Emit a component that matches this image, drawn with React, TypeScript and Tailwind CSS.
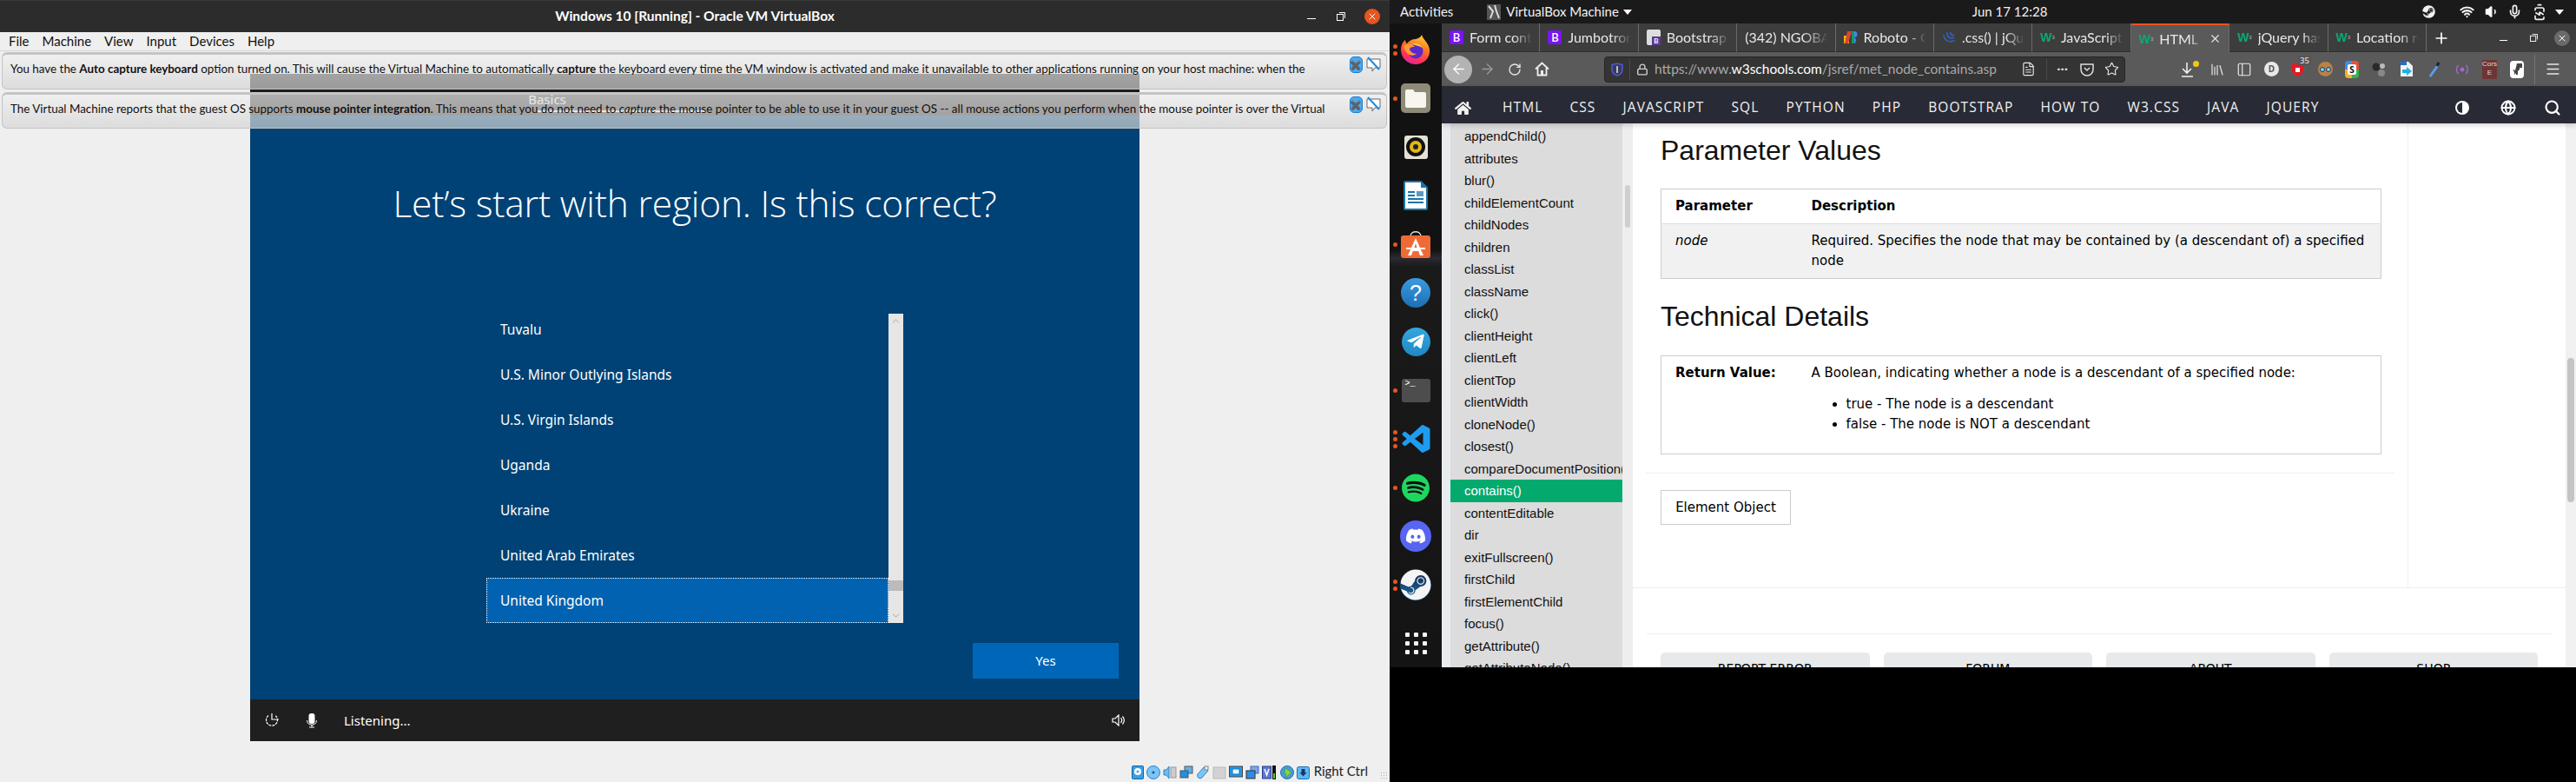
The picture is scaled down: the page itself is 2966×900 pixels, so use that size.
import React from "react";
import { ArrowLeft, ArrowRight, RotateCw, Lock, FileText, Star, Library, PanelLeft, Menu, Plus, X, Search, Globe, ChevronUp, ChevronDown, Volume1, Mic, BatteryCharging, Wifi } from "lucide-react";
import { FaDiscord, FaSpotify, FaSteam, FaHome, FaTelegramPlane } from "react-icons/fa";

const Ubu = "font-['Lato',sans-serif]";

function NoteBtns() {
  return (
    <div className="flex items-center gap-[4px] mr-[6px] mt-[2px] shrink-0">
      <div className="w-[15px] h-[19px] rounded-[5px] bg-[#4aa8ee] border border-[#1b7fd0] flex items-center justify-center text-[#12407c] text-[11px] leading-none font-bold">✖</div>
      <svg width="17" height="19" viewBox="0 0 17 19"><path d="M1 3h15v10h-6l-3 4v-4H1z" fill="#fff" stroke="#666" strokeWidth="1" /><path d="M2 1l13 14" stroke="#1d8be0" strokeWidth="2" /></svg>
    </div>
  );
}

function Notification({ children, h }: { children: React.ReactNode; h: string }) {
  return (
    <div className={`${h} border border-[#c4c4c4] border-t-[3px] rounded-[6px] bg-gradient-to-b from-[#f0f0f0b0] to-[#d4d4d4b0] flex justify-between items-start pl-[9px]`}>
      <div className={`${Ubu} flex-1 min-w-0 text-[13.400px] leading-[32px] text-[#111] whitespace-nowrap`}>{children}</div>
      <NoteBtns />
    </div>
  );
}

const countries = ["Tuvalu", "U.S. Minor Outlying Islands", "U.S. Virgin Islands", "Uganda", "Ukraine", "United Arab Emirates"];

function VmScreen() {
  return (
    <div className="w-[1024px] h-[768px] flex flex-col bg-[#004275] font-['Noto_Sans',sans-serif] text-white">
      <div className="h-[48px] bg-[#1c1c1c] flex flex-col items-center">
        <div className="h-[20px]" />
        <div className="ml-[-340px] text-[15px] leading-[20px] mt-[-1px] text-[#e0e0e0]">Basics</div>
        <div className="ml-[-170px] w-[195px] h-[2px] bg-[#f5f5f5] mt-[3px]" />
      </div>
      <div className="flex-1 flex flex-col items-center">
        <h1 className="mt-[72px] text-[42.500px] leading-[58px] font-light font-['Open_Sans',sans-serif] tracking-[-0.2px] whitespace-nowrap">Let’s start with region. Is this correct?</h1>
        <div className="mt-[98px] w-[480px] h-[356px] flex shrink-0">
          <div className="w-[463px] h-[356px] flex flex-col justify-end overflow-hidden">
            {countries.map((c) => (
              <div key={c} className="h-[52px] shrink-0 pl-[16px] pt-[1px] flex items-center text-[15.500px] text-white">{c}</div>
            ))}
            <div className="h-[52px] shrink-0 pl-[15px] pt-[1px] flex items-center text-[15.500px] bg-[#0062b1] border border-dotted border-white">United Kingdom</div>
          </div>
          <div className="w-[17px] bg-[#e6e6e6] flex flex-col items-center justify-between text-[#999]">
            <ChevronUp size={13} strokeWidth={1.5} className="mt-[2px]" />
            <div className="flex-1" />
            <div className="w-full h-[12px] bg-[#bbbbbb] mb-[22px]" />
            <ChevronDown size={13} strokeWidth={1.5} className="mb-[2px]" />
          </div>
        </div>
        <div className="w-[1024px] flex justify-end pr-[24px] mt-[23px]">
          <div className="w-[168px] h-[41px] bg-[#0067b8] flex items-center justify-center text-[15px]">Yes</div>
        </div>
      </div>
      <div className="h-[48px] bg-[#1f1f1f] flex items-center pl-[16px] pr-[16px]">
        <svg width="18" height="18" viewBox="0 0 18 18" fill="none" stroke="#fff" strokeWidth="1.2"><path d="M5 3.5a6.5 6.5 0 1 0 8 0" strokeDasharray="3 1" /><path d="M9 1v7h8" /></svg>
        <svg className="ml-[30px]" width="14" height="18" viewBox="0 0 14 18" fill="none"><rect x="3.5" y="1" width="7" height="12" rx="3" fill="#fff" /><path d="M1.5 9c0 7 11 7 11 0M7 14v3M4 17h6" stroke="#fff" /></svg>
        <div className="ml-[30px] text-[15px]">Listening...</div>
        <svg className="ml-auto" width="16" height="14" viewBox="0 0 16 14" fill="none" stroke="#fff" strokeWidth="1.2"><path d="M1 5h3l4-4v12l-4-4H1zM10.5 4c1.5 2 1.5 4 0 6M12.5 2.5c2.5 3 2.5 6 0 9" /></svg>
      </div>
    </div>
  );
}

function StatusIcons() {
  const b = "#3b9fe8";
  const items = [
    <svg key="1" width="14" height="16" viewBox="0 0 14 16"><rect x=".5" y=".5" width="13" height="15" rx="1" fill={b} stroke="#14609f" /><circle cx="7" cy="7" r="4" fill="#fff" /><circle cx="7" cy="7" r="1.5" fill={b} /></svg>,
    <svg key="2" width="16" height="16" viewBox="0 0 16 16"><circle cx="8" cy="8" r="7.5" fill="#7cc4f5" stroke="#2b84c9" /><circle cx="8" cy="8" r="1.6" fill="#14609f" /></svg>,
    <svg key="3" width="16" height="16" viewBox="0 0 16 16"><path d="M1 5h3l3-4v14l-3-4H1z" fill="#6dbdf3" stroke="#2b84c9" /><rect x="9" y="2" width="6" height="12" fill="#ccc" stroke="#999" /></svg>,
    <svg key="4" width="16" height="16" viewBox="0 0 16 16"><rect x="6" y="1" width="9" height="8" fill="#5fb0ec" stroke="#555" /><rect x="1" y="6" width="9" height="8" fill="#1e90e6" stroke="#555" /></svg>,
    <svg key="5" width="16" height="16" viewBox="0 0 16 16"><path d="M2 10l7-8 5 4-7 8c-2 2-7 0-5-4z" fill="#7cc4f5" stroke="#2b84c9" /><rect x="10" y="1" width="4" height="4" fill="#eee" stroke="#888" /></svg>,
    <svg key="6" width="16" height="16" viewBox="0 0 16 16"><rect x="1" y="2" width="14" height="13" fill="#d2d2d2" stroke="#bbb" /></svg>,
    <svg key="7" width="16" height="16" viewBox="0 0 16 16"><rect x=".5" y="1" width="15" height="12" fill="#1e9be8" stroke="#444" /><rect x="4" y="4" width="8" height="6" fill="#e9f6ff" stroke="#1477bb" /></svg>,
    <svg key="8" width="16" height="16" viewBox="0 0 16 16"><rect x="6" y="1" width="9" height="8" fill="#7ba6e8" stroke="#3d6dbb" /><rect x="1" y="6" width="10" height="9" fill="#2a8ee0" stroke="#333" /></svg>,
    <svg key="9" width="18" height="16" viewBox="0 0 18 16"><rect x=".5" y="1" width="10" height="14" fill="#5d78d2" stroke="#2a3f8f" /><path d="M3 4l2.5 7L8 4" stroke="#fff" fill="none" strokeWidth="1.5" /><rect x="12" y="0" width="4" height="16" fill="#111" /><rect x="13" y="9" width="2" height="6" fill="#4cd035" /></svg>,
    <svg key="10" width="16" height="16" viewBox="0 0 16 16"><circle cx="8" cy="8" r="7.5" fill="#3f9fe0" stroke="#2b6fa9" /><path d="M6 3l7 5-7 6 1-4-2-2z" fill="#8ed43a" stroke="#4e8f16" strokeWidth=".6" /></svg>,
    <svg key="11" width="15" height="15" viewBox="0 0 15 15"><rect x=".5" y=".5" width="14" height="14" rx="2" fill="#5fb6f2" stroke="#1d6fb0" /><path d="M5.5 3h4v4h2l-4 4.5L3.5 7h2z" fill="#123a6b" /></svg>,
  ];
  return <div className="flex items-center gap-[3px]">{items}</div>;
}

function VBoxWindow() {
  return (
    <div className="w-[1600px] h-[900px] flex flex-col bg-[#efefef]">
      <div className="h-[37px] bg-[#2c2c2c] border-t border-t-[#3a3a3a] flex items-center shrink-0">
        <div className="w-[102px]" />
        <div className={`${Ubu} flex-1 text-center text-[15.500px] font-bold text-white`}>Windows 10 [Running] - Oracle VM VirtualBox</div>
        <div className="w-[102px] flex items-center pl-[4px]">
          <div className="w-[10px] h-[1px] bg-white mt-[4px] ml-[3px]" />
          <svg className="ml-[24px]" width="10" height="10" viewBox="0 0 10 10" fill="none" stroke="#fff"><rect x=".5" y="2.5" width="7" height="7" /><path d="M3 .5h6.5V7" /></svg>
          <div className="ml-[22px] w-[18px] h-[18px] rounded-full bg-[#e95420] flex items-center justify-center text-white"><X size={12} strokeWidth={2} /></div>
        </div>
      </div>
      <div className={`${Ubu} h-[22px] border-b border-[#d8d8d8] flex items-center text-[15px] text-[#111] pl-[10px] gap-[15px] shrink-0`}>
        <span>File</span><span>Machine</span><span>View</span><span>Input</span><span>Devices</span><span>Help</span>
      </div>
      <div className="relative flex-1 flex flex-col">
        <div className="flex-1 flex flex-col items-center pt-[26px]">
          <VmScreen />
        </div>
        <div className="absolute top-[1px] left-[2px] right-[3px] flex flex-col gap-[3px]">
          <Notification h="h-[43px]">You have the <b>Auto capture keyboard</b> option turned on. This will cause the Virtual Machine to automatically <b>capture</b> the keyboard every time the VM window is activated and make it unavailable to other applications running on your host machine: when the</Notification>
          <Notification h="h-[42px]">The Virtual Machine reports that the guest OS supports <b>mouse pointer integration</b>. This means that you do not need to <i>capture</i> the mouse pointer to be able to use it in your guest OS -- all mouse actions you perform when the mouse pointer is over the Virtual</Notification>
        </div>
        <div className="h-[47px] flex items-end justify-end pb-[3px] pr-[3px]">
          <StatusIcons />
          <span className={`${Ubu} text-[15px] leading-[20px] ml-[5px] mr-[14px] text-[#222]`}>Right Ctrl</span>
          <div className="w-[8px] h-[8px] mb-[1px] bg-[radial-gradient(#aaa_1px,transparent_1px)] bg-[length:3px_3px]" />
        </div>
      </div>
    </div>
  );
}

function Firefox() {
  return (
    <svg width="36" height="36" viewBox="0 0 36 36">
      <defs>
        <linearGradient id="ff" x1="0.7" y1="0" x2="0.3" y2="1"><stop offset="0" stopColor="#ffd02e" /><stop offset=".45" stopColor="#ff6a2c" /><stop offset=".8" stopColor="#ff2d60" /><stop offset="1" stopColor="#d02bb0" /></linearGradient>
      </defs>
      <path d="M25 1c1 5 8 9 9 17 1 10-7 17-16 17S1 28 1 18C1 14 3 9 6 7c0 2 1 4 2 4 2-3 6-5 10-5 3-1 6-2 7-5z" fill="url(#ff)" />
      <circle cx="18" cy="20" r="8.5" fill="#592acb" />
      <path d="M4 14c5-3 9-3 13 1-2 0-5 0-6 2 0 3 4 6 8 6-5 4-13 1-15-9z" fill="#ff9a2e" />
      <path d="M13 12c4-2 10-1 13 4-3-2-8-3-13-4z" fill="#ffcf3a" />
    </svg>
  );
}

function Dots({ n }: { n: number }) {
  return (
    <div className="w-[12px] flex flex-col items-center gap-[3px]">
      {Array.from({ length: n }).map((_, i) => <div key={i} className="w-[5px] h-[5px] rounded-full bg-[#e95420]" />)}
    </div>
  );
}

function DockItem({ n = 0, children }: { n?: number; children: React.ReactNode }) {
  return (
    <div className="h-[56px] flex items-center">
      <Dots n={n} />
      <div className="w-[36px] flex items-center justify-center">{children}</div>
    </div>
  );
}

function Dock() {
  return (
    <div className="w-[60px] h-[741px] bg-[#131313] pt-[2px] flex flex-col shrink-0 bg-[linear-gradient(180deg,#121212_0,#121212_260px,#2b2933_270px,#1a1a1a_280px,#141414_100%)]">
      <DockItem n={2}><Firefox /></DockItem>
      <DockItem n={1}>
        <div className="w-[34px] h-[34px] rounded-[5px] bg-[#8f8a78] flex items-center justify-center">
          <svg width="24" height="22" viewBox="0 0 24 22"><path d="M0 3a2 2 0 0 1 2-2h7l2 3h11a2 2 0 0 1 2 2v14a2 2 0 0 1-2 2H2a2 2 0 0 1-2-2z" fill="#f7f5ee" /></svg>
        </div>
      </DockItem>
      <DockItem>
        <div className="w-[27px] h-[27px] rounded-[3px] bg-[#e6e1d6] flex items-center justify-center">
          <div className="w-[22px] h-[22px] rounded-full bg-[#111] flex items-center justify-center"><div className="w-[14px] h-[14px] rounded-full bg-[#e2b714] flex items-center justify-center"><div className="w-[6px] h-[6px] rounded-full bg-[#222]" /></div></div>
        </div>
      </DockItem>
      <DockItem>
        <svg width="28" height="34" viewBox="0 0 28 34"><path d="M1 2a1 1 0 0 1 1-1h18l7 7v24a1 1 0 0 1-1 1H2a1 1 0 0 1-1-1z" fill="#fff" stroke="#1b75a8" strokeWidth="2" /><path d="M20 1l7 7h-7z" fill="#1b75a8" /><path d="M5 13h8M5 17h8M5 21h18M5 25h18" stroke="#1b75a8" strokeWidth="2" /><rect x="15" y="12" width="8" height="6" fill="#5a9bc2" /></svg>
      </DockItem>
      <DockItem n={1}>
        <svg width="34" height="32" viewBox="0 0 34 32"><path d="M11 7c0-7 12-7 12 0" fill="none" stroke="#e8e0d0" strokeWidth="1.4" /><rect x="0" y="6" width="34" height="26" rx="3" fill="#ef6b35" /><path d="M17 9l9 20h-4l-1.800-5h-6.400L12 29H8z M15.500 20h3L17 15z" fill="#fff" /><rect x="6" y="20" width="22" height="2" fill="#fff" /></svg>
      </DockItem>
      <DockItem>
        <div className="w-[34px] h-[34px] rounded-full bg-gradient-to-b from-[#3b9be0] to-[#1c6fb4] flex items-center justify-center text-white text-[25px] leading-none font-['Liberation_Sans',sans-serif]">?</div>
      </DockItem>
      <DockItem>
        <div className="w-[33px] h-[33px] rounded-full bg-gradient-to-b from-[#35a6de] to-[#1e88c6] flex items-center justify-center text-white"><FaTelegramPlane size={22} /></div>
      </DockItem>
      <DockItem n={1}>
        <div className="w-[33px] h-[27px] rounded-[3px] bg-[#4d4d4d] text-white text-[10px] leading-[12px] pl-[4px] font-['Liberation_Mono',monospace]">&gt;_</div>
      </DockItem>
      <DockItem n={3}>
        <svg width="33" height="32" viewBox="0 0 24 24"><path fill="#1f9cf0" d="M23.15 2.587L18.21.21a1.494 1.494 0 0 0-1.705.29l-9.46 8.63-4.12-3.128a.999.999 0 0 0-1.276.057L.327 7.261A1 1 0 0 0 .326 8.74L3.899 12 .326 15.26a1 1 0 0 0 .001 1.479L1.65 17.94a.999.999 0 0 0 1.276.057l4.12-3.128 9.46 8.63a1.492 1.492 0 0 0 1.704.29l4.942-2.377A1.5 1.5 0 0 0 24 20.06V3.939a1.5 1.5 0 0 0-.85-1.352zm-5.146 14.861L10.826 12l7.178-5.448v10.896z" /></svg>
      </DockItem>
      <DockItem n={1}>
        <div className="w-[32px] h-[32px] rounded-full bg-[#111] flex items-center justify-center text-[#1ed760]"><FaSpotify size={33} /></div>
      </DockItem>
      <DockItem>
        <div className="w-[36px] h-[36px] rounded-full bg-[#5865f2] flex items-center justify-center text-white"><FaDiscord size={24} /></div>
      </DockItem>
      <DockItem n={2}>
        <div className="w-[36px] h-[36px] rounded-full bg-gradient-to-b from-[#10244a] to-[#1c6fa8] flex items-center justify-center text-[#f4f4f4] overflow-hidden"><FaSteam size={36} /></div>
      </DockItem>
      <div className="mt-[11px] ml-[12px] w-[36px] h-[56px] flex items-center justify-center">
        <div className="grid grid-cols-3 gap-x-[5px] gap-y-[5px]">
          {Array.from({ length: 9 }).map((_, i) => <div key={i} className="w-[5px] h-[5px] rounded-[1px] bg-[#f5f5f5]" />)}
        </div>
      </div>
    </div>
  );
}

function W3Fav() {
  return <span className="text-[#04aa6d] text-[14px] font-bold leading-none font-['Liberation_Sans',sans-serif] shrink-0">W<sup className="text-[6px] text-[#bbb] font-normal">3</sup></span>;
}
function BFav() {
  return <span className="w-[16px] h-[16px] rounded-[2px] bg-[#7b14f2] text-white text-[13px] leading-[16px] text-center font-semibold shrink-0">B</span>;
}

const tabs: { label: string; fav: React.ReactNode; active?: boolean }[] = [
  { label: "Form contr", fav: <BFav /> },
  { label: "Jumbotron", fav: <BFav /> },
  { label: "Bootstrap", fav: <span className="w-[16px] h-[18px] rounded-[2px] bg-[#ddd] flex items-end justify-end shrink-0"><span className="w-[10px] h-[10px] bg-[#5b3a94] text-white text-[8px] leading-[10px] text-center font-bold">B</span></span> },
  { label: "(342) NGOBAR", fav: null },
  { label: "Roboto - G", fav: <svg className="shrink-0" width="16" height="16" viewBox="0 0 16 16"><rect x="0" y="6" width="6" height="9" fill="#f4b400" /><path d="M4 1h5L5 15H1z" fill="#db4437" /><rect x="9" y="1" width="3" height="14" fill="#0f9d58" /><path d="M12 1a3.500 3.500 0 0 1 0 7 4 4 0 0 1 0 7z" fill="#4285f4" /></svg> },
  { label: ".css() | jQue", fav: <svg className="shrink-0" width="16" height="16" viewBox="0 0 16 16" fill="none" stroke="#2f62c9" strokeWidth="1.5"><path d="M2 5c0 7 8 10 13 6M6 2c-1 6 4 8 8 6M10 2c-1 3 2 4 4 3" /></svg> },
  { label: "JavaScript", fav: <W3Fav /> },
  { label: "HTML D", fav: <W3Fav />, active: true },
  { label: "jQuery has", fav: <W3Fav /> },
  { label: "Location re", fav: <W3Fav /> },
];

function TabStrip() {
  return (
    <div className={`${Ubu} h-[33px] bg-[#3d3d3d] flex items-stretch text-[16px] text-[#e8e8e8]`}>
      {tabs.map((t) => (
        <div key={t.label} className={`w-[113.400px] flex items-center gap-[7px] pl-[9px] pr-[8px] border-r border-[#6a6a6a] ${t.active ? "bg-[#5a5a5a] border-t-[2px] border-t-[#e95420]" : "border-b border-b-[#2e2e2e]"}`}>
          {t.fav}
          <span className="whitespace-nowrap overflow-hidden flex-1 [mask-image:linear-gradient(90deg,#000_70%,transparent)]">{t.label}</span>
          {t.active && <X size={15} strokeWidth={1.8} className="shrink-0" />}
        </div>
      ))}
      <div className="flex items-center pl-[7px] text-white"><Plus size={20} strokeWidth={2} /></div>
      <div className="flex-1" />
      <div className="flex items-center pr-[7px] text-white">
        <div className="w-[9px] h-[1px] bg-white mt-[6px]" />
        <svg className="ml-[26px]" width="9" height="9" viewBox="0 0 10 10" fill="none" stroke="#fff"><rect x=".5" y="2.5" width="7" height="7" /><path d="M3 .5h6.5V7" /></svg>
        <div className="ml-[19px] w-[18px] h-[18px] rounded-full bg-[#6a6a6a] flex items-center justify-center"><X size={12} strokeWidth={2} /></div>
      </div>
    </div>
  );
}

function Toolbar() {
  const tIcon = "shrink-0";
  return (
    <div className="h-[40px] bg-[#5a5a5a] border-b border-[#2e2e2e] flex items-center text-[#e8e8e8]">
      <div className="ml-[3px] w-[32px] h-[32px] rounded-full bg-[#b3b3b3] flex items-center justify-center text-white"><ArrowLeft size={19} strokeWidth={1.6} /></div>
      <ArrowRight size={19} strokeWidth={1.6} className="ml-[8px] text-[#9a9a9a]" />
      <RotateCw size={16} strokeWidth={2} className="ml-[14px]" />
      <svg className="ml-[15px]" width="17" height="17" viewBox="0 0 17 17" fill="none" stroke="#eee" strokeWidth="1.8"><path d="M1 8.500L8.500 1.500 16 8.500M3.500 7v8.500h10V7" /><rect x="7" y="10" width="3" height="5" fill="#eee" stroke="none" /></svg>
      <div className="ml-[63px] w-[600px] h-[30px] rounded-[4px] bg-[#343434] border border-[#252525] flex items-center">
        <svg className="ml-[7px] shrink-0" width="14" height="16" viewBox="0 0 14 16" fill="none"><path d="M1 2.500L7 1l6 1.500V8c0 4-3 6-6 7-3-1-6-3-6-7z" stroke="#4e57d4" strokeWidth="1.600" fill="#3a3a5a" /><path d="M7 4v8" stroke="#bbb" strokeWidth="2" /></svg>
        <div className="ml-[7px] w-[1px] h-[24px] bg-[#4a4a4a]" />
        <Lock size={14} strokeWidth={2.4} className="ml-[7px] text-[#cfcfcf]" />
        <div className={`${Ubu} ml-[7px] text-[15.500px] text-[#a9a9a9] whitespace-nowrap`}>https://www.<span className="text-white">w3schools.com</span>/jsref/met_node_contains.asp</div>
        <div className="flex-1" />
        <FileText size={17} strokeWidth={1.6} className={tIcon} />
        <div className="ml-[12px] w-[1px] h-[24px] bg-[#4a4a4a]" />
        <div className="ml-[11px] text-[15px] leading-none font-bold">···</div>
        <svg className="ml-[14px]" width="16" height="16" viewBox="0 0 16 16" fill="none" stroke="#ddd" strokeWidth="1.500"><path d="M1 2h14v6a7 7 0 0 1-14 0z" /><path d="M5 6l3 3 3-3" /></svg>
        <Star size={17} strokeWidth={1.6} className="ml-[12px] mr-[6px]" />
      </div>
      <div className="ml-[64px] flex items-center h-full">
        <div className="w-[18px] relative flex justify-center">
          <svg width="18" height="20" viewBox="0 0 18 20" fill="none" stroke="#eee" strokeWidth="1.600"><path d="M7 2v11M2 9l5 5 5-5M1 18h13" /></svg>
          <div className="absolute right-[-3px] top-[0px] w-[7px] h-[7px] rounded-full bg-[#f5c518]" />
        </div>
        <Library size={18} strokeWidth={1.6} className="ml-[15px]" />
        <PanelLeft size={18} strokeWidth={1.6} className="ml-[13px]" />
        <div className="ml-[14px] w-[17px] h-[17px] rounded-full bg-[#e8e8e8] text-[#555] text-[10px] leading-[17px] text-center font-bold">D</div>
        <div className="ml-[14px] relative w-[16px] h-[18px]">
          <svg width="15" height="18" viewBox="0 0 15 18"><path d="M1 3l6.500-2L14 3v7c0 3-3 6-6.500 7C4 16 1 13 1 10z" fill="#e01b24" /><rect x="5" y="7" width="5" height="5" fill="#fff" /></svg>
          <div className="absolute top-[-7px] left-[8px] px-[2px] bg-[#555] text-[#eee] text-[9.500px] leading-[11px]">35</div>
        </div>
        <div className="ml-[15px] w-[17px] h-[17px] rounded-full bg-[#b98247] flex items-center justify-center gap-[1px]"><span className="w-[6px] h-[6px] rounded-full bg-[#7fd0f5] border border-[#235]" /><span className="w-[6px] h-[6px] rounded-full bg-[#7fd0f5] border border-[#235]" /></div>
        <div className="ml-[14px] w-[16px] h-[20px] rounded-[4px] bg-[conic-gradient(#e84f3d_0_25%,#3bb04a_25%_50%,#f3b12f_50%_75%,#3f8fe0_75%)] flex items-center justify-center"><span className="w-[10px] h-[12px] bg-[#fff] text-[#111] text-[10px] leading-[12px] text-center font-bold rounded-[2px]">S</span></div>
        <svg className="ml-[15px]" width="16" height="18" viewBox="0 0 16 18"><circle cx="5" cy="6" r="4.500" fill="#2a2a2a" /><circle cx="12" cy="5" r="3" fill="#bbb" /><circle cx="11" cy="13" r="4" fill="#888" /></svg>
        <svg className="ml-[16px]" width="16" height="20" viewBox="0 0 16 20"><path d="M1 1h9l5 5v12H1z" fill="#f2f2f2" /><path d="M1 1h7v4H1z" fill="#1a73c9" /><path d="M3 10h5V7l6 5-6 5v-3H3z" fill="#1ab3e8" /></svg>
        <svg className="ml-[17px]" width="14" height="20" viewBox="0 0 14 20" fill="none"><path d="M2 18L11 5" stroke="#5a9cf0" strokeWidth="3" /><path d="M10 6l2-4" stroke="#222" strokeWidth="3" /></svg>
        <svg className="ml-[17px]" width="16" height="14" viewBox="0 0 16 14" fill="none" stroke="#a868d8" strokeWidth="1.300"><path d="M3.500 2c-2.500 3-2.500 7 0 10M12.500 2c2.500 3 2.500 6 0 10" /><circle cx="8" cy="7" r="1.800" fill="#a868d8" /></svg>
        <div className="ml-[15px] w-[17px] h-[22px] bg-[#6e3535] text-[#ddd] text-[8px] leading-[10px] text-center font-['Liberation_Sans',sans-serif]">Cors<br />E</div>
        <div className="ml-[15px] w-[16px] h-[20px] rounded-[4px] bg-white flex items-center justify-center"><svg width="13" height="15" viewBox="0 0 13 15"><path d="M6 1h6v5H9v2l-2 2v4H5v-2l-2 2v-3L1 8l3 1z" fill="#444" /></svg></div>
        <div className="ml-[12px] w-[1px] h-[34px] bg-[#757575]" />
        <Menu size={19} strokeWidth={1.8} className="ml-[11px]" />
      </div>
    </div>
  );
}

function W3Nav() {
  const items = ["HTML", "CSS", "JAVASCRIPT", "SQL", "PYTHON", "PHP", "BOOTSTRAP", "HOW TO", "W3.CSS", "JAVA", "JQUERY"];
  return (
    <div className="font-['Open_Sans',sans-serif] h-[42px] pt-[6px] bg-[#282a35] flex items-center text-[#f1f1f1] text-[15.500px] tracking-[1.1px] shadow-[0_2px_6px_rgba(0,0,0,.18)] relative">
      <FaHome size={19} className="ml-[15px] shrink-0" />
      <div className="ml-[36px] flex items-center gap-[31px]">
        {items.map((i) => <span key={i} className="whitespace-nowrap">{i}</span>)}
      </div>
      <div className="ml-auto flex items-center text-white pr-[17px]">
        <svg width="18" height="18" viewBox="0 0 18 18"><circle cx="9" cy="9" r="8" fill="#fff" /><path d="M9 3a6 6 0 0 0 0 12z" fill="#282a35" /></svg>
        <Globe size={18} strokeWidth={2.6} className="ml-[35px]" />
        <Search size={20} strokeWidth={2.6} className="ml-[32px]" />
      </div>
    </div>
  );
}

const sideItems = ["appendChild()", "attributes", "blur()", "childElementCount", "childNodes", "children", "classList", "className", "click()", "clientHeight", "clientLeft", "clientTop", "clientWidth", "cloneNode()", "closest()", "compareDocumentPosition()", "contains()", "contentEditable", "dir", "exitFullscreen()", "firstChild", "firstElementChild", "focus()", "getAttribute()", "getAttributeNode()"];

function Sidebar() {
  return (
    <div className="w-[220px] h-full flex shrink-0 overflow-hidden">
      <div className="w-[10px] bg-[#e9ecef]" />
      <div className="w-[198px] bg-[#dcdcdc] pt-[2px] font-['Liberation_Sans',sans-serif] text-[15px] text-[#111]">
        {sideItems.map((s) => (
          <div key={s} className={`h-[25.500px] leading-[25.500px] pl-[16px] whitespace-nowrap overflow-hidden ${s === "contains()" ? "bg-[#04aa6d] text-white" : ""}`}>{s}</div>
        ))}
      </div>
      <div className="w-[12px] bg-[#eeeeee] pt-[71px] flex justify-center">
        <div className="w-[6px] h-[49px] rounded-full bg-[#cfcfcf]" />
      </div>
    </div>
  );
}

function Main() {
  const cell = "px-[16px] py-[8px] align-top";
  return (
    <div className="flex-1 flex flex-col overflow-hidden h-full font-['DejaVu_Sans',sans-serif] text-[15px] leading-[23px] text-black">
      <div className="h-[535px] flex border-b border-[#eeeeee] shrink-0">
        <div className="w-[893px] border-r border-[#f1f1f1] pl-[32px] pr-[31px] flex flex-col">
          <h2 className="mt-[11px] text-[32px] leading-[40px] font-['Liberation_Sans',sans-serif] text-[#111]">Parameter Values</h2>
          <table className="mt-[24px] w-[830px] border border-[#cccccc] border-collapse">
            <tbody>
              <tr className="border-b border-[#dddddd]"><th className={`${cell} w-[157px] text-left`}>Parameter</th><th className={`${cell} text-left`}>Description</th></tr>
              <tr className="bg-[#f1f1f1]"><td className={`${cell} italic`}>node</td><td className={cell}>Required. Specifies the node that may be contained by (a descendant of) a specified node</td></tr>
            </tbody>
          </table>
          <h2 className="mt-[23px] text-[32px] leading-[40px] font-['Liberation_Sans',sans-serif] text-[#111]">Technical Details</h2>
          <table className="mt-[25px] w-[830px] border border-[#cccccc] border-collapse">
            <tbody>
              <tr>
                <th className={`${cell} w-[157px] text-left`}>Return Value:</th>
                <td className={cell}>
                  <div>A Boolean, indicating whether a node is a descendant of a specified node:</div>
                  <ul className="list-disc pl-[40px] mt-[13px] mb-[14px]"><li>true - The node is a descendant</li><li>false - The node is NOT a descendant</li></ul>
                </td>
              </tr>
            </tbody>
          </table>
          <div className="mt-[21px] ml-[-17px] mr-[-16px] h-[1px] bg-[#eeeeee] shrink-0" />
          <div className="mt-[19px] w-[150px] h-[40px] border border-[#cccccc] flex items-center justify-center shrink-0">Element Object</div>
        </div>
      </div>
      <div className="h-[52px] shrink-0" />
      <div className="mx-[16px] h-[1px] bg-[#eeeeee] shrink-0" />
      <div className="mt-[21px] mx-[32px] grid grid-cols-4 gap-[16px] text-center text-[14px]">
        {["REPORT ERROR", "FORUM", "ABOUT", "SHOP"].map((t) => <div key={t} className="h-[50px] bg-[#e7e9eb] rounded-[5px] pt-[7px]">{t}</div>)}
      </div>
    </div>
  );
}

function Browser() {
  return (
    <div className="flex-1 h-[741px] flex flex-col overflow-hidden">
      <TabStrip />
      <Toolbar />
      <W3Nav />
      <div className="flex-1 flex bg-white overflow-hidden">
        <Sidebar />
        <Main />
        <div className="w-[12px] bg-[#f1f1f1] pt-[270px] flex justify-center shrink-0">
          <div className="w-[8px] h-[166px] rounded-full bg-[#c4c4c4]" />
        </div>
      </div>
    </div>
  );
}

function TopBar() {
  return (
    <div className={`${Ubu} h-[27px] bg-[#1a1a1a] flex items-center text-[15px] text-[#f2f2f2] shrink-0`}>
      <span className="ml-[12px]">Activities</span>
      <svg className="ml-[39px]" width="16" height="18" viewBox="0 0 16 18"><rect width="16" height="18" fill="#555" /><path d="M2 2l5 6-3 8M9 1l2 7 3 8" stroke="#ddd" strokeWidth="2" fill="none" /></svg>
      <span className="ml-[6px]">VirtualBox Machine</span>
      <span className="ml-[5px] w-0 h-0 border-l-[5px] border-r-[5px] border-t-[6px] border-l-transparent border-r-transparent border-t-white" />
      <span className="ml-[392px]">Jun 17  12:28</span>
      <div className="ml-auto flex items-center pr-[14px]">
        <FaSteam size={15} />
        <Wifi size={17} strokeWidth={3} className="ml-[28px]" />
        <Volume1 size={17} fill="#fff" className="ml-[12px]" />
        <Mic size={17} strokeWidth={2.4} className="ml-[9px]" />
        <BatteryCharging size={20} strokeWidth={2} className="ml-[10px] -rotate-90" />
        <span className="ml-[8px] w-0 h-0 border-l-[5px] border-r-[5px] border-t-[6px] border-l-transparent border-r-transparent border-t-white" />
      </div>
    </div>
  );
}

export default function App() {
  return (
    <div className="w-[2966px] h-[900px] flex overflow-hidden bg-black">
      <VBoxWindow />
      <div className="flex-1 h-[900px] flex flex-col bg-black">
        <TopBar />
        <div className="flex">
          <Dock />
          <Browser />
        </div>
      </div>
    </div>
  );
}
